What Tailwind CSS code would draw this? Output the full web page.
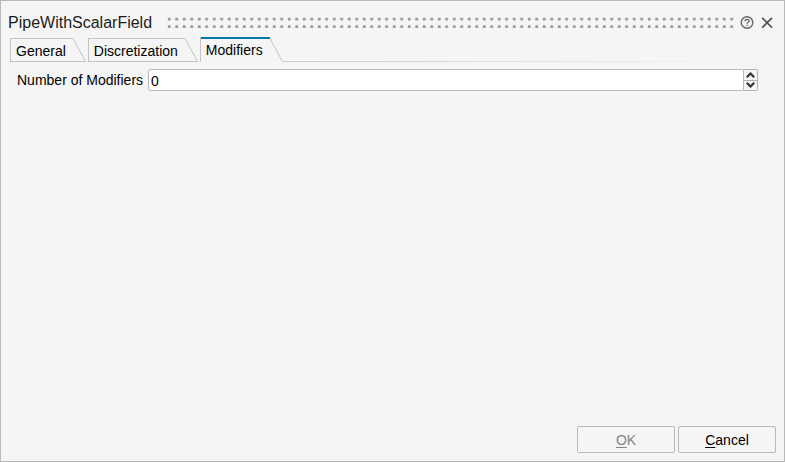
<!DOCTYPE html>
<html lang="en">
<head>
<meta charset="utf-8">
<title>PipeWithScalarField</title>
<script src="https://cdn.jsdelivr.net/npm/@tailwindcss/browser@4"></script>
</head>
<body class="bg-[#f5f5f5] text-black font-['Liberation_Sans',Arial,sans-serif] text-[14px] leading-4">
<main class="flex min-h-screen flex-col border border-[#b9b9b9] pb-2">
  <header class="flex h-9 items-center pt-2 pr-[9px] pl-[7px]">
    <h1 class="text-[16px] leading-5 text-[#1c1c1c]">PipeWithScalarField</h1>
    <svg class="ml-[15px] h-3 min-w-0 flex-1" aria-hidden="true">
      <defs>
        <pattern id="grip" width="7.5" height="12" patternUnits="userSpaceOnUse">
          <path d="M.8 .8h2.8v2.8H.8zM.8 8.3h2.8v2.8H.8z" fill="#9a9a9a"/>
        </pattern>
      </defs>
      <rect width="100%" height="12" fill="url(#grip)"/>
    </svg>
    <button type="button" aria-label="Help" class="ml-[5px] h-4 w-4">
      <svg class="block" width="16" height="16" viewBox="0 0 16 16" fill="none" stroke="#666" aria-hidden="true">
        <circle cx="8" cy="7.5" r="5.8" stroke-width="1.4"/>
        <path d="M6 6.3C6 4.9 6.8 4.3 8 4.3s2 .7 2 1.7c0 1.2-1.9 1.3-1.9 2.7M8.1 9.7V11" stroke-width="1.3"/>
      </svg>
    </button>
    <button type="button" aria-label="Close" class="ml-1 h-4 w-4">
      <svg class="block" width="16" height="16" viewBox="0 0 16 16" fill="none" stroke="#555" stroke-width="1.7" aria-hidden="true">
        <path d="M3.2 2.8l9.8 9.8M13 2.8L3.2 12.6"/>
      </svg>
    </button>
  </header>

  <div class="flex items-end pr-10 pl-[9px]">
    <div role="tablist" class="flex items-end gap-0.5">
      <div class="flex">
        <button type="button" role="tab" aria-selected="false" class="h-6 border-t border-b border-l border-[#c4c4c4] pr-[7px] pl-[5px] pt-0.5">General</button>
        <svg width="13" height="24" viewBox="0 0 13 24" fill="none" stroke="#c4c4c4" aria-hidden="true"><path d="M0 .5L12.5 23.5H0M12 23.5h1"/></svg>
      </div>
      <div class="flex">
        <button type="button" role="tab" aria-selected="false" class="h-6 border-t border-b border-l border-[#c4c4c4] pr-[7px] pl-[5px] pt-0.5">Discretization</button>
        <svg width="13" height="24" viewBox="0 0 13 24" fill="none" stroke="#c4c4c4" aria-hidden="true"><path d="M0 .5L12.5 23.5H0M12 23.5h1"/></svg>
      </div>
      <div class="flex">
        <button type="button" role="tab" aria-selected="true" class="h-[25px] border-l border-[#c4c4c4] pr-[7px] pl-[5px] pt-0 shadow-[inset_0_2px_0_#0078a8]">Modifiers</button>
        <svg width="13" height="25" viewBox="0 0 13 25" fill="none" stroke="#c4c4c4" aria-hidden="true"><path d="M0 1.5L12.5 24.5"/></svg>
      </div>
    </div>
    <div class="h-px flex-1 bg-linear-to-r from-[#cccccc] to-[#f5f5f5]"></div>
  </div>

  <section class="flex flex-1 items-start pt-[7px] pr-[26px] pl-4">
    <label for="count" class="mr-[5px] py-[3px]">Number of Modifiers</label>
    <div class="flex h-[22px] min-w-0 flex-1">
      <input id="count" type="text" inputmode="numeric" value="0" class="min-w-0 flex-1 rounded-l-xs border border-[#b9b9b9] bg-white pt-0.5 pl-0.5 outline-none">
      <div class="flex w-[14px] flex-col rounded-r-xs border border-l-0 border-[#b0b0b0]">
        <button type="button" aria-label="Increase" class="flex flex-1 items-center justify-center border-b border-[#b0b0b0]">
          <svg width="9" height="6" viewBox="0 0 9 6" fill="none" stroke="#333" stroke-width="2.2" aria-hidden="true"><path d="M.8 5.2l3.7-3.7 3.7 3.7"/></svg>
        </button>
        <button type="button" aria-label="Decrease" class="flex flex-1 items-center justify-center">
          <svg width="9" height="6" viewBox="0 0 9 6" fill="none" stroke="#333" stroke-width="2.2" aria-hidden="true"><path d="M.8 .8l3.7 3.7L8.200 .8"/></svg>
        </button>
      </div>
    </div>
  </section>

  <footer class="flex justify-end gap-[3px] pr-2">
    <button type="button" disabled class="h-[27px] w-[98px] rounded-xs border border-[#b9b9b9] text-[#858585]"><span class="underline underline-offset-2">O</span>K</button>
    <button type="button" class="h-[27px] w-[98px] rounded-xs border border-[#b9b9b9]"><span class="underline underline-offset-2">C</span>ancel</button>
  </footer>
</main>
</body>
</html>
